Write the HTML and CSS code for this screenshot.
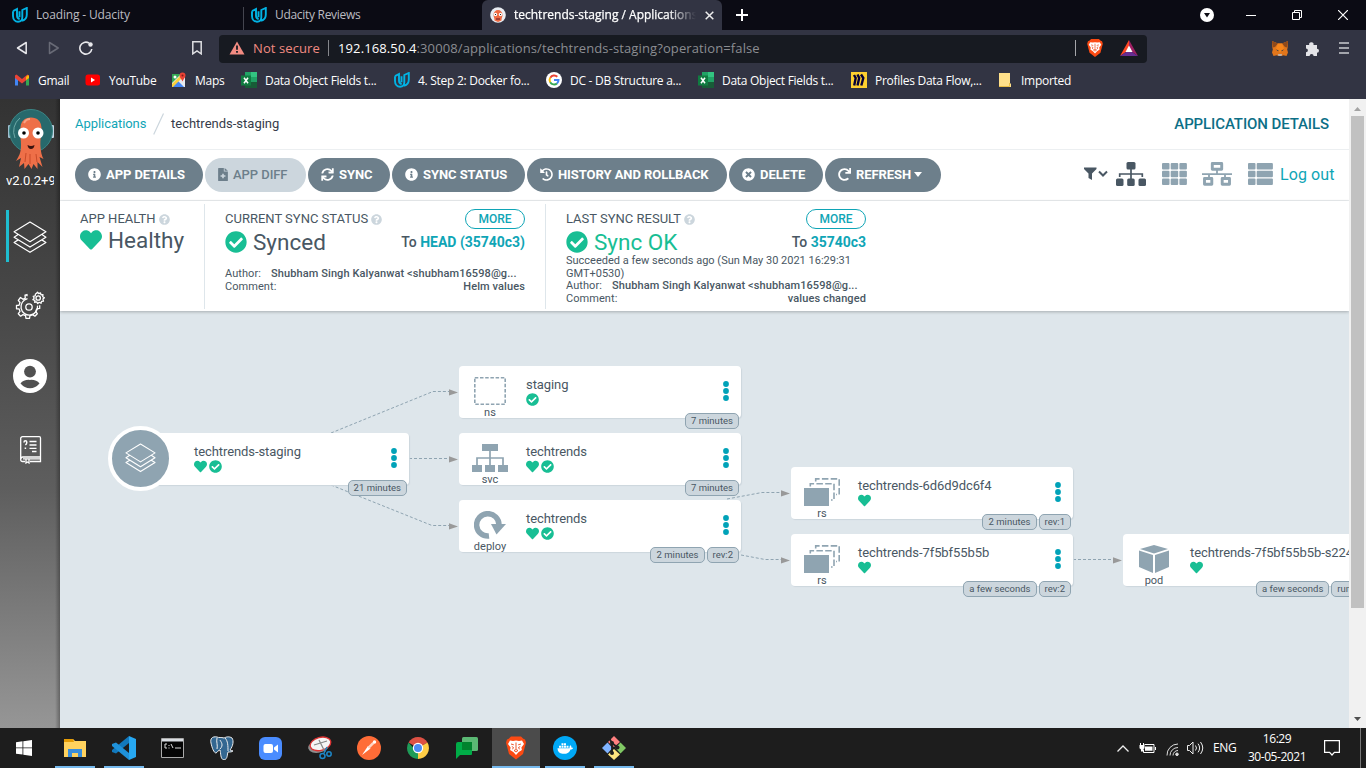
FILE: index.html
```
<!DOCTYPE html>
<html lang="en">
<head>
<meta charset="utf-8">
<title>techtrends-staging / Applications</title>
<link rel="stylesheet" href="styles.css">
</head>
<body>
<svg class="defs" aria-hidden="true">
  <symbol id="udacity" viewBox="0 0 16 16"><path d="M1 4.200 5 2v6.500c0 2 1 3.300 2.700 3.700M1 4.200V9c0 3.500 2.200 5.700 5 5.700 2.600 0 4.300-1.700 4.300-4.500V3L14.800 1v6.500c0 3.500-2 5.600-4.700 6.200M7.500 4.300v6" fill="none" stroke="#02b3e4" stroke-width="1.900"/></symbol>
  <symbol id="excel" viewBox="0 0 16 16"><path d="M4 0h12v16H4z" fill="#185c37"/><path d="M4 0h6v5H4z" fill="#21a366"/><path d="M10 0h6v5h-6z" fill="#33c481"/><path d="M4 5h6v6H4z" fill="#107c41"/><path d="M10 5h6v5h-6z" fill="#21a366"/><path d="M0 3.500h10v10H0z" fill="#107c41"/><path d="m3 5.800 4 5.400m0-5.400-4 5.400" stroke="#fff" stroke-width="1.500"/></symbol>
  <symbol id="brave" viewBox="0 0 20 23"><path d="M5 0h10l2.300 2.300L19 3l1 3-.5 2-2.500 9.500-7 5.500-7-5.500L.5 8 0 6l1-3 1.700-.7z" fill="#fb4a13"/><path d="m4 4 3 .6L10 4l3 .6L16 4l2 3.500-2.600 3.500.5 2.500-3.200 2-2.700 3-2.700-3-3.200-2 .5-2.500L2 7.500z" fill="#fff"/><path d="m5 7.500 2.800.8M15 7.500l-2.800.8M10 6v6.500M5.800 10l1.700 1-1 1.800m7.700-2.800-1.700 1 1 1.800M8 14l2-1 2 1-2 1.500z" fill="none" stroke="#e94514" stroke-width=".9"/></symbol>
  <symbol id="info" viewBox="0 0 512 512"><path d="M256 8C119.043 8 8 119.083 8 256c0 136.997 111.043 248 248 248s248-111.003 248-248C504 119.083 392.957 8 256 8zm0 110c23.196 0 42 18.804 42 42s-18.804 42-42 42-42-18.804-42-42 18.804-42 42-42zm56 254c0 6.627-5.373 12-12 12h-88c-6.627 0-12-5.373-12-12v-24c0-6.627 5.373-12 12-12h12v-64h-12c-6.627 0-12-5.373-12-12v-24c0-6.627 5.373-12 12-12h64c6.627 0 12 5.373 12 12v100h12c6.627 0 12 5.373 12 12v24z"/></symbol>
  <symbol id="check" viewBox="0 0 512 512"><path d="M504 256c0 136.967-111.033 248-248 248S8 392.967 8 256 119.033 8 256 8s248 111.033 248 248zM227.314 387.314l184-184c6.248-6.248 6.248-16.379 0-22.627l-22.627-22.627c-6.248-6.249-16.379-6.249-22.628 0L216 308.118l-70.059-70.059c-6.248-6.248-16.379-6.248-22.628 0l-22.627 22.627c-6.248 6.248-6.248 16.379 0 22.627l104 104c6.249 6.249 16.379 6.249 22.628.001z"/></symbol>
  <symbol id="heart" viewBox="0 0 512 512"><path d="M462.300 62.600C407.500 15.900 326 24.300 275.700 76.200L256 96.500l-19.700-20.300C186.100 24.300 104.500 15.900 49.700 62.600c-62.800 53.600-66.100 149.800-9.900 207.900l193.500 199.800c12.500 12.900 32.800 12.900 45.300 0l193.500-199.800c56.300-58.100 53-154.300-9.800-207.900z"/></symbol>
  <symbol id="question" viewBox="0 0 512 512"><path d="M504 256c0 136.997-111.043 248-248 248S8 392.997 8 256C8 119.083 119.043 8 256 8s248 111.083 248 248zM262.655 90c-54.497 0-89.255 22.957-116.549 63.758-3.536 5.286-2.353 12.415 2.715 16.258l34.699 26.310c5.205 3.947 12.621 3.008 16.665-2.122 17.864-22.658 30.113-35.797 57.303-35.797 20.429 0 45.698 13.148 45.698 32.958 0 14.976-12.363 22.667-32.534 33.976C247.128 238.528 216 254.941 216 296v4c0 6.627 5.373 12 12 12h56c6.627 0 12-5.373 12-12v-1.333c0-28.462 83.186-29.647 83.186-106.667 0-58.002-60.165-102-116.531-102zM256 338c-25.365 0-46 20.635-46 46 0 25.364 20.635 46 46 46s46-20.636 46-46c0-25.365-20.635-46-46-46z"/></symbol>
  <symbol id="layers" viewBox="0 0 32 32"><path d="M16 1 31 10.200 16 19.500 1 10.200zM4.500 13 1 15.200l15 9.300 15-9.300-3.500-2.200M4.500 18 1 20.200l15 9.300 15-9.300-3.500-2.200" fill="none" stroke="#fff" stroke-width="1.150" stroke-linejoin="round"/></symbol>
  <symbol id="rs" viewBox="0 0 36 28"><path d="M0 10h25v18H0z" fill="#8fa4b1"/><path d="M6.300 8.500V5.800H30V22h-3" fill="none" stroke="#8fa4b1" stroke-width="1.600" stroke-dasharray="6.500 2.300"/><path d="M11.700 3.500V.9h23.500V16.500H32" fill="none" stroke="#8fa4b1" stroke-width="1.600" stroke-dasharray="6.500 2.300"/></symbol>
  <symbol id="dots" viewBox="0 0 6 20"><circle cx="3" cy="3" r="2.900"/><circle cx="3" cy="10" r="2.900"/><circle cx="3" cy="17" r="2.900"/></symbol>
</svg>

<header class="chrome">
  <div class="tabs">
    <div class="tab tab-first"><svg class="i16"><use href="#udacity"/></svg><span>Loading - Udacity</span></div>
    <div class="tab tab-second"><svg class="i16"><use href="#udacity"/></svg><span>Udacity Reviews</span></div>
    <div class="tab tab-active">
      <svg class="i16" viewBox="0 0 16 16"><circle cx="8" cy="8" r="7.800" fill="#e9edf2"/><path d="M3.500 8a4.500 5 0 0 1 9 0c0 2-1 3-1 5.500L8 15l-3.500-1.500c0-2.500-1-3.500-1-5.500" fill="#ef6a42"/><circle cx="5.500" cy="7.500" r="1.700" fill="#fff"/><circle cx="10.500" cy="7.500" r="1.700" fill="#fff"/><circle cx="5.500" cy="7.500" r=".6"/><circle cx="10.500" cy="7.500" r=".6"/><path d="M6 12h4" stroke="#612"/></svg>
      <span class="active-title">techtrends-staging / Applications</span>
      <svg class="tab-close" viewBox="0 0 9 9"><path d="m.7.7 7.600 7.600m0-7.600L.7 8.300" stroke="#eee" stroke-width="1.500"/></svg>
    </div>
    <svg class="plus" viewBox="0 0 12 12"><path d="M6 0v12M0 6h12" stroke="#fff" stroke-width="2"/></svg>
    <div class="winctl">
      <svg width="14" height="14" viewBox="0 0 14 14"><circle cx="7" cy="7" r="7" fill="#fff"/><path d="M4 5h6L7 9.500z" fill="#0c0c14"/></svg>
      <svg width="10" height="12" viewBox="0 0 10 12"><path d="M0 6.500h10" stroke="#fff"/></svg>
      <svg width="10" height="10" viewBox="0 0 10 10"><path d="M.5 2.500h7v7h-7zM2.500 2.500v-2h7v7h-2" fill="none" stroke="#fff"/></svg>
      <svg width="10" height="10" viewBox="0 0 10 10"><path d="m0 0 10 10m0-10L0 10" stroke="#fff" stroke-width="1.200"/></svg>
    </div>
  </div>
  <div class="toolbar">
    <div class="nav">
      <svg width="12" height="14" viewBox="0 0 12 14"><path d="M10.200 1.500v11L1.500 7z" fill="none" stroke="#e8e8ec" stroke-width="1.500" stroke-linejoin="round"/></svg>
      <svg width="12" height="14" viewBox="0 0 12 14"><path d="M1.500 1.500v11L10.200 7z" fill="none" stroke="#686a76" stroke-width="1.500" stroke-linejoin="round"/></svg>
      <svg width="14" height="14" viewBox="0 0 14 14"><path d="M10 2A6 6 0 1 0 12.800 8" fill="none" stroke="#e8e8ec" stroke-width="1.600"/><circle cx="11.500" cy="3.500" r="2.200" fill="#e8e8ec"/></svg>
      <svg class="bm" width="10" height="14" viewBox="0 0 10 14"><path d="M.8.8h8.400v12L5 9.800.8 12.800z" fill="none" stroke="#dedee2" stroke-width="1.500"/></svg>
    </div>
    <div class="url">
      <svg width="16" height="14" viewBox="0 0 16 14"><path d="M8 .5 15.500 13.500H.5z" fill="#f28b82"/><path d="M8 4.500v4.300m0 1.200v1.800" stroke="#171a21" stroke-width="1.800"/></svg>
      <span class="insecure">Not secure</span><i class="vbar"></i>
      <span class="address"><b>192.168.50.4</b>:30008/applications/techtrends-staging?operation=false</span>
      <i class="vbar vbar-end"></i>
      <svg width="16" height="18"><use href="#brave"/></svg>
      <svg class="bat" width="18" height="16" viewBox="0 0 18 16"><path d="M9 0 0 16l9-6z" fill="#ff4724"/><path d="M9 0l9 16-9-6z" fill="#9e1f63"/><path d="M0 16h18l-9-6z" fill="#662d91"/><path d="m9 5.500 3.500 6.500h-7z" fill="#fff"/></svg>
    </div>
    <div class="ext">
      <svg width="16" height="15" viewBox="0 0 16 15"><path d="m0 0 6 2.500h4L16 0v5l-.8 3.500.8 3L14.500 15l-3.500-.8-1 .8H6l-1-.8-3.500.8L0 11.500l.8-3L0 5z" fill="#e2761b"/><path d="m0 0 6 2.500L3 6 .5 6.500zm16 0-6 2.500L13 6l2.500.5z" fill="#8e4a1c"/><path d="m6 2.500-2 5 4 4 4-4-2-5z" fill="#f6851b"/><path d="M5.800 13h4.400l-.7 2h-3z" fill="#c0ad9e"/><path d="m4 8.500 2.500.8-.3 1zm8 0-2.500.8.3 1z" fill="#233447"/></svg>
      <svg width="15" height="15" viewBox="0 0 15 15"><path d="M1 4h3.200a2.200 2.200 0 1 1 4.300 0H12v3.700a2 2 0 1 1 0 4V15H8.600a2 2 0 0 0-4 0H1v-3.800a1.900 1.900 0 0 0 0-3.800z" fill="#e4e4e8"/></svg>
      <svg width="10" height="12" viewBox="0 0 10 12"><path d="M0 1h10M0 6h10M0 11h10" stroke="#c9cad0" stroke-width="1.700"/></svg>
    </div>
  </div>
  <nav class="bookmarks">
    <a class="b-gmail"><svg class="i16" viewBox="0 0 16 16"><path d="M1 3.500v10h3V7z" fill="#4285f4"/><path d="M15 3.500v10h-3V7z" fill="#34a853"/><path d="m1 3.500 1.500-1L8 7l5.500-4.500 1.500 1V6l-7 5.500L1 6z" fill="#ea4335"/><path d="m12 5 2-2 1 1v2l-3 2z" fill="#fbbc04"/></svg><span>Gmail</span></a>
    <a class="b-youtube"><svg class="i16" viewBox="0 0 16 16"><rect x=".5" y="2.500" width="14.500" height="11" rx="2.500" fill="#f00"/><path d="m6 5.500 4 2.500-4 2.500z" fill="#fff"/></svg><span>YouTube</span></a>
    <a class="b-maps"><svg class="i16" viewBox="0 0 16 16"><path d="M1 2h13v13H1z" fill="#e8eaed"/><path d="M1 2h9L1 11z" fill="#34a853"/><path d="m1 15 6-6 6 6z" fill="#4285f4"/><path d="M1 12 11 2l2 2L2 15H1z" fill="#fbd13b"/><circle cx="4" cy="5" r="1.500" fill="#fff"/><path d="M8.500 3.500a3 3 0 0 1 6 0c0 2-2 3.500-3 6-1-2.500-3-4-3-6" fill="#ea4335"/><circle cx="11.500" cy="3.500" r="1" fill="#861c16"/></svg><span>Maps</span></a>
    <a class="b-wide"><svg class="i16"><use href="#excel"/></svg><span>Data Object Fields t...</span></a>
    <a class="b-step"><svg class="i16"><use href="#udacity"/></svg><span>4. Step 2: Docker fo...</span></a>
    <a class="b-dc"><svg class="i16" viewBox="0 0 16 16"><circle cx="8" cy="8" r="8" fill="#fff"/><path d="M11.300 4.800A4.500 4.500 0 0 0 4.300 5.700" fill="none" stroke="#ea4335" stroke-width="2"/><path d="M4.200 5.800a4.500 4.500 0 0 0 0 4.500" fill="none" stroke="#fbbc04" stroke-width="2"/><path d="M4.200 10.200a4.500 4.500 0 0 0 6.800 1.200" fill="none" stroke="#34a853" stroke-width="2"/><path d="M8 8h4.500c0 1.500-.5 2.500-1.500 3.400" fill="none" stroke="#4285f4" stroke-width="2"/></svg><span>DC - DB Structure a...</span></a>
    <a class="b-wide2"><svg class="i16"><use href="#excel"/></svg><span>Data Object Fields t...</span></a>
    <a class="b-profiles"><svg class="i16" viewBox="0 0 16 16"><path d="M0 0h16v16H0z" fill="#ffd02f"/><path d="m3 3 1.700 3-1.500 7.500M6.500 2.500l1.700 3.500-1.700 7.500M10 2.500 12.300 6l-2 7.500" fill="none" stroke="#050038" stroke-width="2.400"/></svg><span>Profiles Data Flow,...</span></a>
    <a class="b-imported"><svg width="12" height="14" viewBox="0 0 12 14"><path d="M0 0h11v10l1 1v3H0z" fill="#ffe08a"/><path d="M0 13.500h10.500V10" fill="none" stroke="#e9bd45"/></svg><span>Imported</span></a>
  </nav>
</header>

<div class="app">
  <aside class="side">
    <svg class="argo" viewBox="0 0 46 60"><rect x="0" y="16" width="3" height="13" rx="1" fill="#9fbfd0"/><rect x="43" y="16" width="3" height="13" rx="1" fill="#c3d5e4"/><circle cx="23" cy="22" r="21.500" fill="#27696c"/><circle cx="23" cy="22" r="21.500" fill="none" stroke="#3b8585" stroke-width="1"/><path d="M7 29A17 17 0 0 1 12 9" fill="none" stroke="#6faaa8" stroke-width="1"/><path d="M12.500 21C12 12 17 8.500 23 8.500S34 12 33.500 21c0 5-1.500 9-1 17 .5 5 1 8 3 12l-4-2 3 10-5-5 0 7-4-5-2 5-3-5-4 5-.5-6-5 4 2-9-5 3c3-5 5-8 5-16 0-6-1-9-1-15" fill="#ee6f48"/><path d="M16 14q2-4 6-4" stroke="#f7a285" stroke-width="2" fill="none"/><path d="M18 44l-1 9m5-8v10m6-10 1 8" stroke="#c94a28" stroke-width="1"/><circle cx="15.500" cy="24" r="5.500" fill="#fff"/><circle cx="30" cy="24" r="5.500" fill="#fff"/><circle cx="16" cy="24" r="1.800"/><circle cx="30" cy="24" r="1.800"/><path d="M19.500 36q3.500 2 7 0-.5 4-3.500 4t-3.500-4" fill="#3a1410"/></svg>
    <div class="version">v2.0.2+9</div>
    <div class="side-item selected"><svg width="34" height="34"><use href="#layers"/></svg></div>
    <div class="side-item"><svg width="30" height="30" viewBox="0 0 30 30" fill="none" stroke="#fff" stroke-width="1.300" stroke-linejoin="round"><path d="M12 5.300V3.500l-2 .6.300 3-2.300 1.200L5.500 6.500 3.300 9.300 5 11.500l-1 2.800H1.500v3.500H4l1 2.600-1.700 2.300 2.300 2.500 2.400-1.600 2.500 1 .5 2.800h3.500l.5-2.800 2.600-1 2.300 1.600 2.400-2.500-1.600-2.300 1-2.500 3-.5v-3.200"/><path d="M12.500 7.700a8.300 8.300 0 1 0 10 7"/><circle cx="14" cy="16" r="3.200"/><path d="m21.500 2.500 1-1.300 1.200 1.500 1.800-.8.500 2 2-.2-.3 2 1.700 1.100-1.500 1.300.6 2-2 .2-.5 2-1.800-1-1.500 1.300-1-1.700-2 .5.200-2-2-.8 1.300-1.500-1-1.800 2-.5.300-2z"/><circle cx="23.200" cy="7" r="2.200"/></svg></div>
    <div class="side-item user"><svg width="34" height="34" viewBox="0 0 34 34"><circle cx="17" cy="17" r="17" fill="#fff"/><circle cx="17" cy="12.600" r="5.900" fill="#505050"/><path d="M7.500 24.500q3-4 9.500-3.600 6.500-.4 9.500 3.600-4 4.700-9.500 4.700t-9.500-4.700" fill="#505050"/></svg></div>
    <div class="side-item docs"><svg width="22" height="28" viewBox="0 0 22 28" fill="none" stroke="#fff" stroke-width="1.300"><path d="M5 25.500H2.500a1.800 1.800 0 0 1-1.800-1.800V2.500A1.800 1.800 0 0 1 2.500.7h16.800a1.200 1.200 0 0 1 1.200 1.200v23.600H10M1 23q0-2 1.800-2h17.700M3 22.900h17"/><path d="M6 23v4l1.500-1L9 27v-4M9.500 5.500h7M9.500 9h7m-7 3.300h7M12 15.500h4.500"/><path d="M4 6.500q0-1.700 1.400-1.700t1.400 1.400Q6.800 8 5.400 9M5.400 11.500v1.500" stroke-width="1.500"/></svg></div>
  </aside>

  <main class="page">
    <div class="crumbs"><a>Applications</a><svg width="12" height="22" viewBox="0 0 12 22"><path d="m.7 21.500 9.800-21" stroke="#ccd6dd" stroke-width="1.200"/></svg><span>techtrends-staging</span><strong>APPLICATION DETAILS</strong></div>

    <div class="actions">
      <button class="w-details"><svg><use href="#info"/></svg><span>APP DETAILS</span></button>
      <button class="w-diff disabled"><svg class="file" viewBox="0 0 384 512"><path fill-rule="evenodd" d="M24 0h200v136h160v352c0 13-11 24-24 24H24c-13 0-24-11-24-24V24C0 11 11 0 24 0m136 224v64H96v56h64v64h64v-64h64v-56h-64v-64zM256 0l128 104H256z"/></svg><span>APP DIFF</span></button>
      <button class="w-sync"><svg viewBox="0 0 512 512"><path d="M440 8h48c7 0 12 5 12 12v180c0 7-5 12-12 12H308c-7 0-12-5-12-12v-46c0-7 5-12 12-12l86 4A176 176 0 0 0 89 203c-2 6-6 9-12 9H28c-8 0-13-7-12-14A248 248 0 0 1 432 84l-4-63c0-7 5-13 12-13zM72 504H24c-7 0-12-5-12-12V312c0-7 5-12 12-12h180c7 0 12 5 12 12v46c0 7-5 12-12 12l-86-4a176 176 0 0 0 305-57c2-6 6-9 12-9h49c8 0 13 7 12 14A248 248 0 0 1 80 428l4 63c0 7-5 13-12 13z"/></svg><span>SYNC</span></button>
      <button class="w-status"><svg><use href="#info"/></svg><span>SYNC STATUS</span></button>
      <button class="w-history"><svg viewBox="0 0 512 512"><path d="M504 255.531c.253 136.640-111.180 248.372-247.820 248.468-59.015.042-113.223-20.530-155.822-54.911-11.077-8.940-11.905-25.541-1.839-35.607l11.267-11.267c8.609-8.609 22.353-9.551 31.891-1.984C173.062 425.135 212.781 440 256 440c101.705 0 184-82.311 184-184 0-101.705-82.311-184-184-184-48.814 0-93.149 18.969-126.068 49.932l50.754 50.754c10.080 10.080 2.941 27.314-11.313 27.314H24c-8.837 0-16-7.163-16-16V38.627c0-14.254 17.234-21.393 27.314-11.314l49.372 49.372C129.209 34.136 189.552 8 256 8c136.810 0 247.747 110.780 248 247.531zm-180.912 78.784l9.823-12.630c8.138-10.463 6.253-25.542-4.210-33.679L288 256.349V152c0-13.255-10.745-24-24-24h-16c-13.255 0-24 10.745-24 24v135.651l65.409 50.874c10.463 8.137 25.541 6.253 33.679-4.210z"/></svg><span>HISTORY AND ROLLBACK</span></button>
      <button class="w-delete"><svg viewBox="0 0 512 512"><path d="M256 8C119 8 8 119 8 256s111 248 248 248 248-111 248-248S393 8 256 8zm121.600 313.100c4.700 4.700 4.700 12.300 0 17L338 377.600c-4.700 4.700-12.300 4.700-17 0L256 312l-65.100 65.600c-4.700 4.700-12.300 4.700-17 0L134.400 338c-4.700-4.700-4.700-12.300 0-17l65.600-65-65.600-65.100c-4.700-4.700-4.700-12.300 0-17l39.600-39.600c4.700-4.700 12.300-4.700 17 0l65 65.700 65.100-65.600c4.700-4.700 12.300-4.700 17 0l39.600 39.600c4.700 4.700 4.700 12.300 0 17L312 256l65.600 65.100z"/></svg><span>DELETE</span></button>
      <button class="w-refresh"><svg viewBox="0 0 512 512"><path d="M500.330 0h-47.410a12 12 0 0 0-12 12.570l4 82.760A247.420 247.420 0 0 0 256 8C119.340 8 7.900 119.530 8 256.190 8.100 393.070 119.100 504 256 504a247.100 247.100 0 0 0 166.180-63.910 12 12 0 0 0 .480-17.430l-34-34a12 12 0 0 0-16.380-.550A176 176 0 1 1 402.100 157.800l-101.530-4.870a12 12 0 0 0-12.570 12v47.410a12 12 0 0 0 12 12h200.330a12 12 0 0 0 12-12V12a12 12 0 0 0-12-12z"/></svg><span>REFRESH</span><i class="caret"></i></button>
      <div class="views">
        <svg class="filter" width="24" height="14" viewBox="0 0 24 14"><path d="M0 .5h12.500V2L8 6.500V13l-3.500-2V6.500L0 2z" fill="#495763"/><path d="m15 4.500 4 4 4-4" fill="none" stroke="#495763" stroke-width="2"/></svg>
        <svg class="tree" width="30" height="24" viewBox="0 0 30 24"><g fill="#495763"><rect x="10.500" width="9" height="7.500" rx="1.500"/><rect y="16.500" width="7.500" height="7.500" rx="1.500"/><rect x="11.200" y="16.500" width="7.500" height="7.500" rx="1.500"/><rect x="22.500" y="16.500" width="7.500" height="7.500" rx="1.500"/></g><path d="M15 7v10M3.700 15v-3h22.600v3" fill="none" stroke="#495763" stroke-width="1.700"/></svg>
        <svg class="grid" width="25" height="22" viewBox="0 0 25 22" fill="#8fa4b1"><g id="gridrow"><rect width="7.500" height="6.500" rx="1"/><rect x="8.700" width="7.500" height="6.500" rx="1"/><rect x="17.400" width="7.500" height="6.500" rx="1"/></g><use href="#gridrow" y="7.700"/><use href="#gridrow" y="15.400"/></svg>
        <svg class="net" width="30" height="24" viewBox="0 0 30 24" fill="none" stroke="#8fa4b1"><path d="M0 12.200h30M15 8v4M7 12v4m16-4v4" stroke-width="1.800"/><path d="M10.300 1.500h9.400v5.800h-9.400zM2.500 16.500h7.300v5.800H2.500zM20.200 16.500h7.300v5.800h-7.300z" stroke-width="2.900" stroke-linejoin="round"/></svg>
        <svg class="list" width="25" height="22" viewBox="0 0 25 22" fill="#8fa4b1"><g id="listrow"><rect width="7.500" height="6.500" rx="1"/><rect x="8.700" width="16.200" height="6.500" rx="1"/></g><use href="#listrow" y="7.700"/><use href="#listrow" y="15.400"/></svg>
        <a class="logout">Log out</a>
      </div>
    </div>

    <section class="status">
      <div class="panel health">
        <h6>APP HEALTH<svg><use href="#question"/></svg></h6>
        <p class="big"><svg><use href="#heart"/></svg>Healthy</p>
      </div>
      <div class="panel current">
        <h6>CURRENT SYNC STATUS<svg><use href="#question"/></svg><a class="more">MORE</a></h6>
        <p class="big"><svg><use href="#check"/></svg>Synced<span class="to">To <a>HEAD (35740c3)</a></span></p>
        <div class="meta"><span>Author:</span><b class="mail">Shubham Singh Kalyanwat &lt;shubham16598@g...</b></div>
        <div class="meta"><span>Comment:</span><b class="right">Helm values</b></div>
      </div>
      <div class="panel last">
        <h6>LAST SYNC RESULT<svg><use href="#question"/></svg><a class="more">MORE</a></h6>
        <p class="big ok"><svg><use href="#check"/></svg>Sync OK<span class="to">To <a>35740c3</a></span></p>
        <div class="when">Succeeded a few seconds ago (Sun May 30 2021 16:29:31<br>GMT+0530)</div>
        <div class="meta"><span>Author:</span><b class="mail">Shubham Singh Kalyanwat &lt;shubham16598@g...</b></div>
        <div class="meta"><span>Comment:</span><b class="right">values changed</b></div>
      </div>
    </section>

    <section class="canvas">
      <svg class="edges" viewBox="60 311 1289 417">
        <g fill="none" stroke="#8fa4b1" stroke-dasharray="3 2"><path d="M331 433 433 391.500H450M409 458.500H450M331 485 432 525.500H450M727 499 762 492.500H782M741 555 765 559.500H782M1073 559.500H1115"/></g>
        <path d="M449 389.200l9 3.200-9 3.200zM449 456.200l9 3.200-9 3.200zM449 523.200l9 3.200-9 3.200zM781 490.200l9 3.200-9 3.200zM781 557.200l9 3.200-9 3.200zM1113 557.200l9 3.200-9 3.200z" fill="#999"/>
      </svg>
      <article class="node n-root">
        <div class="disc"><svg width="31" height="31"><use href="#layers"/></svg></div>
        <div class="info"><span>techtrends-staging</span><div class="marks"><svg><use href="#heart"/></svg><svg><use href="#check"/></svg></div></div>
        <svg class="dots"><use href="#dots"/></svg><div class="tags"><span>21 minutes</span></div>
      </article>
      <article class="node n-ns">
        <div class="kind"><svg width="32" height="28" viewBox="0 0 32 28"><path d="M.8.8h30.400v26.400H.8z" fill="none" stroke="#8fa4b1" stroke-width="1.600" stroke-dasharray="3.500 1.700"/></svg><span>ns</span></div>
        <div class="info"><span>staging</span><div class="marks"><svg><use href="#check"/></svg></div></div>
        <svg class="dots"><use href="#dots"/></svg><div class="tags"><span>7 minutes</span></div>
      </article>
      <article class="node n-svc">
        <div class="kind"><svg width="36" height="28" viewBox="0 0 36 28"><path d="M10 0h16v7H10zM0 21h10v7H0zM13 21h10v7H13zM26 21h10v7H26z" fill="#8fa4b1"/><path d="M18 7v14M5 21v-7h26v7" fill="none" stroke="#8fa4b1" stroke-width="1.700"/></svg><span>svc</span></div>
        <div class="info"><span>techtrends</span><div class="marks"><svg><use href="#heart"/></svg><svg><use href="#check"/></svg></div></div>
        <svg class="dots"><use href="#dots"/></svg><div class="tags"><span>7 minutes</span></div>
      </article>
      <article class="node n-deploy">
        <div class="kind"><svg width="32" height="28" viewBox="0 0 32 28"><path d="M15 25A11.200 11.200 0 1 1 25 14" fill="none" stroke="#8fa4b1" stroke-width="5.500"/><path d="M17 13h15l-9.500 10.500z" fill="#8fa4b1"/></svg><span>deploy</span></div>
        <div class="info"><span>techtrends</span><div class="marks"><svg><use href="#heart"/></svg><svg><use href="#check"/></svg></div></div>
        <svg class="dots"><use href="#dots"/></svg><div class="tags"><span>2 minutes</span><span>rev:2</span></div>
      </article>
      <article class="node n-rs1">
        <div class="kind"><svg width="36" height="28"><use href="#rs"/></svg><span>rs</span></div>
        <div class="info"><span>techtrends-6d6d9dc6f4</span><div class="marks"><svg><use href="#heart"/></svg></div></div>
        <svg class="dots"><use href="#dots"/></svg><div class="tags"><span>2 minutes</span><span>rev:1</span></div>
      </article>
      <article class="node n-rs2">
        <div class="kind"><svg width="36" height="28"><use href="#rs"/></svg><span>rs</span></div>
        <div class="info"><span>techtrends-7f5bf55b5b</span><div class="marks"><svg><use href="#heart"/></svg></div></div>
        <svg class="dots"><use href="#dots"/></svg><div class="tags"><span>a few seconds</span><span>rev:2</span></div>
      </article>
      <article class="node n-pod">
        <div class="kind"><svg width="30" height="28" viewBox="0 0 30 28" fill="#8fa4b1"><path d="M15 0 29 4 15 8.500 1 4zM0 5.500l14 4.500v18L0 22zM30 5.500 16 10v18l14-6z"/></svg><span>pod</span></div>
        <div class="info"><span>techtrends-7f5bf55b5b-s224</span><div class="marks"><svg><use href="#heart"/></svg></div></div>
        <div class="tags"><span>a few seconds</span><span>running</span></div>
      </article>
    </section>
  </main>
  <div class="scroll"><svg width="7" height="4" viewBox="0 0 7 4"><path d="M0 4h7L3.500 0z" fill="#a3a3a3"/></svg><div class="thumb"></div><svg class="down" width="7" height="4" viewBox="0 0 7 4"><path d="M0 0h7L3.500 4z" fill="#505050"/></svg></div>
</div>

<footer class="taskbar">
  <div class="slot"><svg width="16" height="16" viewBox="0 0 16 16"><path d="M0 2.200 6.500 1.300v6.200H0zM7.300 1.200 16 0v7.500H7.300zM0 8.300h6.500v6.200L0 13.700zM7.300 8.300H16V16l-8.700-1.200z" fill="#fff"/></svg></div>
  <div class="slot on"><svg width="22" height="20" viewBox="0 0 22 20"><path d="M0 1h9l2 2h11v16H0z" fill="#ffd25e"/><path d="M0 1h9l1 3H0z" fill="#e59c06"/><path d="M4 11h14v8h-4v-4H8v4H4z" fill="#3a8edb"/></svg></div>
  <div class="slot on"><svg width="24" height="24" viewBox="0 0 24 24"><path d="m17 0 7 3v18l-7 3z" fill="#27a8f2"/><path d="M17 0v7L4 17.500 0 16v-2z" fill="#1279bd"/><path d="M17 24v-7L4 6.500 0 8v2z" fill="#1f92da"/></svg></div>
  <div class="slot"><svg width="23" height="20" viewBox="0 0 23 20"><path d="M.5.500h22v19H.5z" fill="#050505" stroke="#aaa"/><path d="M1 1h21v2.500H1z" fill="#d9dde2"/><path d="M6 6H4v4h2m2-3v1m0 1.500v1M10 6l2 4M14 10h6" fill="none" stroke="#ddd"/></svg></div>
  <div class="slot"><svg width="24" height="24" viewBox="0 0 24 24"><path d="M7 1C2 0 0 3 1 7c1 5 3 10 5 10 2-1 2-3 4-3 1 3 0 9 4 10 4-1 3-6 4-8 2 0 4 0 5-1-1-1-2 0-3-1 3-4 4-9 2-12-3-2-6-1-8 0-3-1-5 0-7-1" fill="#336791" stroke="#eee" stroke-width="1"/><path d="M7 2c-1 4 1 7 0 11M15 2c3 3 3 8 3 13M10 13c4-4 1-7 0-9" fill="none" stroke="#eee"/></svg></div>
  <div class="slot"><svg width="23" height="23" viewBox="0 0 23 23"><rect width="23" height="23" rx="6" fill="#4a8cff"/><rect x="4.500" y="7" width="9.500" height="9" rx="2" fill="#fff"/><path d="m15 10.500 4-3v8l-4-3z" fill="#fff"/></svg></div>
  <div class="slot"><svg width="24" height="24" viewBox="0 0 24 24"><ellipse cx="11" cy="10" rx="11" ry="6.500" transform="rotate(-15 11 10)" fill="#8e8e8e"/><ellipse cx="12.500" cy="8" rx="10.500" ry="6.500" transform="rotate(-15 12 8)" fill="#f5f5f5" stroke="#d33" stroke-width="1.300"/><path d="m6 9 13-4m-8-1 6 12" stroke="#888" stroke-width="1.200"/><g fill="none" stroke="#1d87c9" stroke-width="1.500"><circle cx="14.500" cy="20" r="2.500"/><circle cx="21" cy="18" r="2.200"/><path d="m16 17 3-6"/></g></svg></div>
  <div class="slot"><svg width="24" height="24" viewBox="0 0 24 24"><circle cx="12" cy="12" r="12" fill="#ff6c37"/><path d="m5 19 6-9 2.500 2.500z" fill="#fff"/><path d="m10.500 11 5-5 1.800 1.800-5 5z" fill="#ffd5c5"/><circle cx="17.500" cy="6" r="1.700" fill="#fff"/></svg></div>
  <div class="slot"><svg width="22" height="22" viewBox="0 0 22 22"><path d="M11 11 1.500 5.500a11 11 0 0 1 19 0z" fill="#dd5144"/><path d="m11 11 9.500-5.500A11 11 0 0 1 11 22z" fill="#ffcd46"/><path d="M11 22A11 11 0 0 1 1.500 5.500L11 16z" fill="#1e9b58"/><circle cx="11" cy="11" r="5.200" fill="#fff"/><circle cx="11" cy="11" r="4" fill="#4c8bf5"/></svg></div>
  <div class="slot"><svg width="22" height="22" viewBox="0 0 22 22"><rect x="6" width="16" height="14" rx="1.500" fill="#5bb974"/><path d="M0 7q0-2 2-2h14v12q0 1-1 1H4l-4 4z" fill="#00ac47"/><path d="M6 5h10v8H6z" fill="#00832d"/></svg></div>
  <div class="slot focus"><svg width="20" height="24"><use href="#brave"/></svg></div>
  <div class="slot on"><svg width="24" height="24" viewBox="0 0 24 24"><circle cx="12" cy="12" r="12" fill="#00a8f5"/><path d="M4.500 12.300h12c0-1.500 0-2.300 1-3 .8.800 1 1.700 1 2.400h1.700c-.7 1.500-1.700 1.700-2.700 1.700-1.500 4-5 4.600-8 4.300-3-.2-5-2-5-5.400M6 9.700h2v2H6zm2.500 0h2v2h-2zm2.500 0h2v2h-2zm2.500 0h2v2h-2zM8.500 7.300h2v2h-2zm2.500 0h2v2h-2z" fill="#fff"/></svg></div>
  <div class="slot on"><svg width="24" height="24" viewBox="0 0 24 24"><path d="m12 0 6 6-6 5-6-5z" fill="#ff8080"/><path d="m18.500 6.500 5.500 5.500-5.500 5.500L13.500 12z" fill="#80c864"/><path d="m5.500 6.500 5 5.500-5 5.500L0 12z" fill="#80b3ff"/><path d="m12 13 6 5.500-6 5.500-6-5.500z" fill="#ffe680"/><g fill="#1f1f1f"><circle cx="10" cy="7" r="2"/><circle cx="10" cy="17" r="2"/><circle cx="15.500" cy="11.500" r="2"/></g><path d="M7 2l3 5v10m0-10 5.500 4.500" fill="none" stroke="#1f1f1f" stroke-width="1.800"/></svg></div>
  <div class="tray">
    <svg class="chev" width="12" height="7" viewBox="0 0 12 7"><path d="m.5 6.500 5.500-5.500 5.500 5.500" fill="none" stroke="#eee" stroke-width="1.300"/></svg>
    <svg class="batt" width="17" height="13" viewBox="0 0 17 13"><path d="M5.500 2.500h9.500v8H4.500v-3" fill="none" stroke="#fff"/><path d="M6 4.500h7.500v4.300H6zM16 5h1v3h-1zM.5 3h5v3.300L4 7.500v2H2v-2L.5 6.300z" fill="#fff"/><path d="M1.500 1v2.500m3-2.500v2.500" stroke="#fff"/></svg>
    <svg class="wifi" width="14" height="13" viewBox="0 0 14 13" fill="none" stroke="#ddd"><path d="M1 12.500A11 11 0 0 1 12 1M4 12.500A8 8 0 0 1 12 4.500M7 12.500a5 5 0 0 1 5-5" /><circle cx="11" cy="11.300" r="1.300" fill="#ddd"/></svg>
    <svg class="sound" width="17" height="14" viewBox="0 0 17 14" fill="none" stroke="#eee"><path d="M.5 4.500h2l3.500-3.500v12l-3.500-3.500h-2zM8.500 4.500q2 2.500 0 5M11 2.700q3.300 4.300 0 8.600M13.500 1q4.500 6 0 12"/></svg>
    <span class="lang">ENG</span>
    <div class="clock"><span>16:29</span><span>30-05-2021</span></div>
    <svg class="note" width="16" height="16" viewBox="0 0 16 16"><path d="M.6.600h14.800v11.800h-5L8 15l-2.400-2.600h-5z" fill="none" stroke="#fff" stroke-width="1.200"/></svg>
    <i class="peek"></i>
  </div>
</footer>
</body>
</html>
```

FILE: styles.css
```
* { box-sizing: border-box; }
body { margin: 0; width: 1366px; height: 768px; overflow: hidden; display: flex; flex-direction: column; font-family: Roboto, "Liberation Sans", sans-serif; color: #495763; }
svg { display: block; flex: none; }
span, b, a { white-space: nowrap; }
.defs { position: absolute; width: 0; height: 0; }
.i16 { width: 16px; height: 16px; }

/* browser chrome */
.chrome { height: 99px; flex: none; background: #323443; font-family: "Open Sans", sans-serif; font-size: 12px; color: #fff; }
.tabs { height: 30px; background: #0b0b14; display: flex; align-items: center; }
.tab { display: flex; align-items: center; gap: 8px; height: 30px; color: #bbbbc1; letter-spacing: -.15px; }
.tab span { padding-bottom: 1px; }
.tab-first { width: 244px; padding-left: 12px; background: linear-gradient(#44454f, #44454f) right bottom / 1px 23px no-repeat; }
.tab-second { width: 238px; padding-left: 7px; letter-spacing: -.3px; }
.tab-active { width: 240px; padding-left: 8px; background: #323443; border-radius: 6px 6px 0 0; color: #fff; letter-spacing: 0; }
.active-title { width: 182px; overflow: hidden; -webkit-text-stroke: .25px #fff; -webkit-mask-image: linear-gradient(90deg, #000 85%, transparent); mask-image: linear-gradient(90deg, #000 85%, transparent); }
.tab-close { width: 9px; height: 9px; margin-left: 1px; }
.plus { width: 12px; height: 12px; margin-left: 14px; }
.winctl { margin-left: auto; display: flex; align-items: center; padding: 0 18px 1px 0; }
.winctl svg + svg { margin-left: 36px; }
.winctl svg:nth-child(2) { margin-left: 32px; }
.toolbar { height: 35px; display: flex; align-items: center; padding-top: 1px; }
.nav { width: 219px; display: flex; align-items: center; padding-left: 16px; gap: 20px; }
.nav svg:nth-child(3) { margin-left: -1px; }
.nav .bm { margin-left: 79px; }
.url { width: 928px; height: 28px; margin-top: 1px; border-radius: 4px; background: #171a21; display: flex; align-items: center; padding: 0 0 1px 10px; font-size: 13px; color: #8b8d92; }
.insecure { color: #f28b82; margin-left: 8px; width: 67px; letter-spacing: .1px; }
.vbar { width: 1px; height: 16px; background: #85878c; margin: 0 9px 0 8px; }
.address b { font-weight: 400; color: #fff; }
.address { letter-spacing: .115px; }
.vbar-end { margin: 0 11px 0 auto; background: #a5a6aa; }
.bat { margin: 0 9px 0 17px; }
.ext { display: flex; align-items: center; margin-left: auto; padding-right: 17px; gap: 19px; }
.ext svg:nth-child(2) { margin-left: -2px; }
.bookmarks { height: 30px; display: flex; align-items: center; padding-left: 14px; }
.bookmarks a { display: flex; align-items: center; gap: 8px; letter-spacing: -.28px; }
.b-gmail { width: 71px; }
.b-youtube { width: 86px; }
.b-maps { width: 70px; }
.b-wide { width: 153px; }
.b-step, .b-dc { width: 152px; }
.b-wide2 { width: 153px; }
.b-profiles { width: 148px; }
.bookmarks .b-imported { gap: 10px; }

/* application frame */
.app { flex: 1; min-height: 0; display: flex; background: #fff; }
.side { width: 60px; flex: none; background: linear-gradient(90deg, transparent 55px, rgba(0,0,0,.3)), linear-gradient(#333, #474747 32%, #5e5e5e 62%, #969696); display: flex; flex-direction: column; align-items: center; }
.argo { width: 46px; height: 60px; margin: 10px 0 0 2px; }
.version { align-self: flex-start; margin: 4px 0 0 6px; width: 48px; overflow: hidden; white-space: nowrap; color: #fff; font-size: 13px; line-height: 15px; }
.side-item { width: 48px; height: 52px; display: flex; align-items: center; justify-content: center; margin-top: 18px; }
.selected { margin-top: 22px; border-left: 3px solid #1fbdd0; padding: 3px 3px 0 0; }
.side-item.user { margin-top: 18px; }
.side-item.docs { margin-top: 22px; padding-left: 2px; }
.page { width: 1289px; display: flex; flex-direction: column; overflow: hidden; }
.crumbs { height: 51px; border-bottom: 1px solid #eceff1; display: flex; align-items: center; padding: 0 20px 1px 15px; font-size: 13px; color: #363c4a; }
.crumbs a { color: #0fa5b6; width: 78px; letter-spacing: -.05px; }
.crumbs svg { margin-right: 6px; }
.crumbs strong { margin-left: auto; color: #0c6f87; font-size: 15px; font-weight: 500; letter-spacing: -.1px; }
.actions { height: 51px; border-bottom: 1px solid #eceff1; display: flex; align-items: center; gap: 2px; padding-left: 15px; }
button { height: 34px; border: 0; padding: 0 0 2px 13px; border-radius: 17px; background: #6d7f8b; color: #fff; font: 700 13px Roboto, sans-serif; letter-spacing: -.06px; display: flex; align-items: center; gap: 5px; flex: none; }
button svg { width: 13px; height: 13px; fill: currentColor; }
button .file { width: 10px; }
.w-details { width: 128px; }
.w-diff { width: 101px; }
.w-sync { width: 82px; }
.w-status { width: 133px; }
.w-history { width: 200px; }
.w-delete { width: 94px; }
.w-refresh { width: 116px; }
.disabled { background: #ccd6dd; color: #6d7f8b; font-weight: 500; }
.caret { border: 4px solid transparent; border-top: 5px solid #fff; border-bottom: 0; margin-left: -2px; }
.views { margin-left: auto; display: flex; align-items: center; padding: 0 14px 2px 0; }
.tree { margin-left: 8px; }
.grid { margin-left: 16px; }
.net { margin-left: 15px; }
.list { margin-left: 16px; }
.logout { margin-left: 7px; font-size: 16px; color: #0fa5b6; width: 55px; letter-spacing: .1px; }

/* status panel */
.status { height: 110px; flex: none; display: flex; padding: 3px 0 3px 5px; position: relative; box-shadow: 0 1px 3px rgba(0,0,0,.25); z-index: 1; }
.panel { border-right: 1px solid #dee6eb; color: #495763; height: 105px; }
.panel h6 { margin: 0; font-size: 13px; font-weight: 400; height: 20px; line-height: 20px; display: flex; align-items: center; letter-spacing: 0; }
.panel h6 svg { width: 11px; height: 11px; fill: #ccd6dd; margin-left: 3px; }
.health { width: 140px; padding: 5px 0 0 15px; }
.current { width: 341px; padding: 5px 20px 0 20px; }
.last { width: 340px; padding: 5px 20px 0; border: 0; }
.big { margin: 0; font-size: 22.500px; line-height: 24px; height: 24px; padding-top: 1px; display: flex; align-items: center; }
.big svg { width: 22px; height: 22px; fill: #18be94; margin-right: 6px; }
.health .big { height: 20px; }
.ok { color: #18be94; }
.to { margin-left: auto; font-size: 14px; font-weight: 500; color: #495763; letter-spacing: -.02px; }
.to a { color: #0fa5b6; font-weight: 700; }
.more { margin-left: auto; width: 60px; height: 20px; line-height: 18px; border: 1px solid #0fa5b6; border-radius: 10px; text-align: center; color: #0fa5b6; font-size: 12px; font-weight: 500; }
.meta { display: flex; font-size: 11px; line-height: 13px; letter-spacing: .06px; }
.meta span { width: 46px; }
.meta b { font-weight: 500; letter-spacing: .1px; }
.meta .right { margin-left: auto; }
.current .big + .meta { margin-top: 14px; }
.when { font-size: 11px; line-height: 13px; height: 25px; margin-top: 1px; white-space: nowrap; }

/* resource tree */
.canvas { flex: 1; position: relative; background: #dee6eb; overflow: hidden; }
.edges { position: absolute; inset: 0; width: 1289px; height: 417px; }
.node { position: absolute; width: 282px; height: 52px; background: #fff; border-radius: 4px; box-shadow: 1px 1px 1px #ccd6dd; }
.n-root { left: 79px; top: 122px; width: 270px; }
.n-ns { left: 399px; top: 55px; }
.n-svc { left: 399px; top: 122px; }
.n-deploy { left: 399px; top: 189px; }
.n-rs1 { left: 731px; top: 156px; }
.n-rs2 { left: 731px; top: 223px; }
.n-pod { left: 1063px; top: 223px; }
.disc { position: absolute; left: -31px; top: -7px; width: 65px; height: 65px; border-radius: 50%; border: 4px solid #fff; background: #8fa4b1; display: flex; align-items: center; justify-content: center; }
.kind { position: absolute; left: 0; top: 11px; width: 62px; display: flex; flex-direction: column; align-items: center; font-size: 11px; line-height: 13px; }
.kind span { margin-top: 1px; }
.info { padding: 11px 0 0 67px; font-size: 13px; line-height: 15px; letter-spacing: -.08px; }
.n-root .info { padding-left: 55px; }
.marks { display: flex; gap: 2px; margin-top: 1px; }
.marks svg { width: 13px; height: 13px; fill: #18be94; }
.dots { position: absolute; right: 12px; top: 15px; width: 6px; height: 20px; fill: #00a2b8; }
.tags { position: absolute; right: 2px; top: 47px; display: flex; gap: 2px; }
.n-pod .tags { left: 133px; right: auto; }
.tags span { height: 16px; border: 1px solid #8fa4b1; border-radius: 5px; background: #ccd6dd; padding: 0 5px; font-size: 9.500px; line-height: 14px; letter-spacing: .02px; }
.scroll { width: 17px; background: #f1f1f1; display: flex; flex-direction: column; align-items: center; padding-top: 8px; }
.thumb { width: 13px; height: 492px; margin-top: 5px; background: #c1c1c1; }
.down { margin: auto 0 7px; }

/* taskbar */
.taskbar { height: 40px; flex: none; background: #1d1d1d; display: flex; color: #fff; font-family: "Open Sans", sans-serif; font-size: 12px; }
.slot { width: 49px; display: flex; align-items: center; justify-content: center; flex: none; }
.slot:first-child { width: 50px; padding-right: 2px; }
.on { background: linear-gradient(#76b9ed, #76b9ed) center bottom / 40px 2px no-repeat; }
.slot.focus { width: 48px; background: linear-gradient(#76b9ed, #76b9ed) bottom / 100% 2px no-repeat, #4b4b4b; margin: 0 0 0 1px; }
.tray { margin-left: auto; display: flex; align-items: center; width: 249px; }
.batt { margin-left: 10px; }
.wifi { margin: 3px 0 0 10px; }
.sound { margin-left: 7px; }
.lang { margin-left: 9px; width: 24px; letter-spacing: -.4px; padding-bottom: 1px; }
.clock { width: 64px; margin-left: 8px; display: flex; flex-direction: column; align-items: center; line-height: 18px; letter-spacing: -.45px; }
.note { margin-left: 15px; margin-bottom: 1px; }
.peek { width: 1px; height: 40px; background: #777; margin-left: 20px; }
```
